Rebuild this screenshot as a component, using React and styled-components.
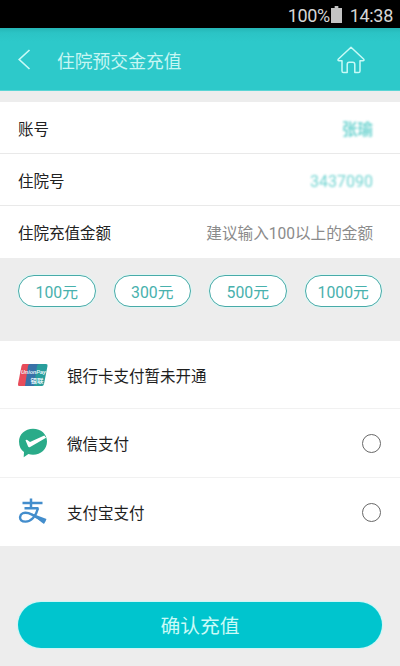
import React from 'react';
import styled, { createGlobalStyle } from 'styled-components';

const GlobalStyle = createGlobalStyle`
  * { box-sizing: border-box; }
  body {
    margin: 0;
    background: #ededed;
    font-family: Roboto, "Noto Sans CJK SC", sans-serif;
  }
  button { font-family: inherit; padding: 0; margin: 0; border: 0; background: none; }
`;

const Screen = styled.div`
  width: 400px;
  height: 666px;
  display: flex;
  flex-direction: column;
  background: #ededed;
  overflow: hidden;
`;

const StatusBar = styled.div`
  height: 28px;
  flex: none;
  background: #000;
  color: #d6d6d6;
  display: flex;
  justify-content: flex-end;
  align-items: center;
  padding: 3px 7px 0 0;
  font-size: 18px;
  line-height: 25px;
`;

const BatteryLevel = styled.span`
  letter-spacing: -0.4px;
`;

const BatteryIcon = styled.svg`
  width: 11px;
  height: 18px;
  margin: 0 8px 4px 1px;
`;

const Clock = styled.span`
  letter-spacing: -0.3px;
  white-space: nowrap;
`;

const Header = styled.header`
  height: 63px;
  flex: none;
  display: flex;
  align-items: center;
  padding: 1px 35px 0 18px;
  background: linear-gradient(#25b6b6 0, #2bc4c5 5px, #2dc9ca 14px);
  border-bottom: 1px solid #5bd5d5;
`;

const BackButton = styled.button`
  width: 39px;
  height: 24px;
  svg { display: block; }
`;

const Title = styled.h1`
  flex: 1;
  margin: 0;
  padding-top: 4px;
  font-size: 17.8px;
  line-height: 26px;
  font-weight: 400;
  color: #c6f6f3;
`;

const HomeButton = styled.button`
  width: 28px;
  height: 28px;
  svg { display: block; }
`;

const AccountPanel = styled.section`
  margin-top: 11px;
  flex: none;
  background: #fff;
`;

const Field = styled.div`
  height: 52px;
  display: flex;
  align-items: center;
  justify-content: space-between;
  padding: 5px 27px 0 18px;
  font-size: 15.5px;
  line-height: 24px;
  color: #222;
  border-bottom: 1px solid #e9e9e9;
  &:last-child { border-color: #fff; }
`;

const MaskedValue = styled.span`
  color: #43c6c2;
  font-size: ${(p) => p.$size}px;
  font-weight: ${(p) => p.$weight};
  opacity: 0.75;
  filter: blur(0.9px);
`;

const Hint = styled.span`
  color: #8b8b8b;
  font-size: 15.6px;
`;

const AmountBar = styled.section`
  height: 83px;
  flex: none;
  display: grid;
  grid-template-columns: repeat(4, 1fr);
  column-gap: 18px;
  padding: 17px 18px 0;
`;

const AmountChip = styled.button`
  height: 32px;
  border: 1px solid #48aaa8;
  border-radius: 16px;
  background: #fff;
  box-shadow: 0 0 1px 1px #dff5f3;
  color: #48b1ad;
  font-size: 15.8px;
  line-height: 30px;
  padding-top: 2px;
`;

const PaymentPanel = styled.section`
  flex: none;
  background: #fff;
`;

const PaymentRow = styled.div`
  height: ${(p) => p.$height}px;
  display: flex;
  align-items: center;
  padding: 0 19px 0 18px;
  border-bottom: 1px solid #f1f1f1;
  &:last-child { border-color: #fff; }
`;

const PaymentIcon = styled.div`
  width: 49px;
  svg { display: block; }
`;

const PaymentName = styled.span`
  flex: 1;
  padding-top: 4px;
  font-size: 15.5px;
  line-height: 24px;
  color: #1e1e1e;
`;

const Radio = styled.span`
  width: 19px;
  height: 19px;
  margin-top: 1px;
  border: 1px solid #686868;
  border-radius: 50%;
`;

const ConfirmButton = styled.button`
  height: 46px;
  flex: none;
  margin: 56px 18px 0;
  border-radius: 23px;
  background: #00c5ce;
  box-shadow: 0 0 1px 1px #c9f6f6;
  color: #cafaf7;
  font-size: 19.8px;
  line-height: 42px;
  padding-top: 4px;
`;

const UnionPayLogo = () => (
  <svg width="30" height="22" viewBox="0 0 30 22" overflow="visible">
    <path d="M5 0H14L9 22H1Q-.3 22 0 20L3.5 2Q4 0 5 0Z" fill="#e84c5a" />
    <path d="M12 0H22L18 22H7L10 2Q10.5 0 12 0Z" fill="#3872a8" />
    <path d="M21 0H28Q30 0 29.5 2L26 20Q25.5 22 24 22H16L19 2Q19.3 0 21 0Z" fill="#289e9c" />
    <text x="3" y="9.500" textLength="25" lengthAdjust="spacingAndGlyphs" fontSize="6.2" fontWeight="500" fontStyle="italic" fontFamily="Roboto, sans-serif" fill="#eef8fc">UnionPay</text>
    <text x="12.5" y="18.800" textLength="13" lengthAdjust="spacingAndGlyphs" fontSize="6" fontWeight="700" fontFamily="Noto Sans CJK SC, sans-serif" fill="#e3f4f8">银联</text>
  </svg>
);

const WeChatPayLogo = () => (
  <svg width="30" height="30" viewBox="0 0 30 30">
    <path d="M15 .8C7 .8 1 6.5 1 13.5c0 5 2 8.500 5 10.600L5.700 29.300l4.700-3.300c1.500.5 3 .7 4.600.7 8 0 14-5.700 14-13.200S23 .8 15 .8Z" fill="#2aab89" />
    <path d="M7.500 12.300q.8-.9 1.800-.2l2.700 2L26.300 7.500l1.800 2.300L11.700 19.200q-1 .5-1.600-.6Z" fill="#fff" />
  </svg>
);

const AlipayLogo = () => (
  <svg width="30" height="30" viewBox="0 0 30 30" fill="none" stroke="#438dcc">
    <path d="M13 1.500V11M4.500 6H24.500M6.500 11.200H20.500" strokeWidth="2.500" />
    <path d="M20 11.200C18 19.500 13 24.600 7.500 24.600C3.500 24.600 1.800 22.600 2.100 20C2.500 16.500 6 14.800 10.500 16.200C16 18.100 20 22 27.300 24.300" strokeWidth="2.400" />
    <path d="M14 16.600L28.500 22L26 27.100Q20.500 23.500 14 16.600Z" fill="#438dcc" stroke="none" />
  </svg>
);

const amounts = ['100元', '300元', '500元', '1000元'];

const payments = [
  { name: '银行卡支付暂未开通', Logo: UnionPayLogo, height: 68, selectable: false },
  { name: '微信支付', Logo: WeChatPayLogo, height: 69, selectable: true },
  { name: '支付宝支付', Logo: AlipayLogo, height: 68, selectable: true },
];

export default function App() {
  return (
    <Screen>
      <GlobalStyle />
      <StatusBar>
        <BatteryLevel>100%</BatteryLevel>
        <BatteryIcon viewBox="0 0 12 18" preserveAspectRatio="none">
          <path d="M4 1h4v2h4v15H0V3h4Z" fill="#c4c4c4" />
        </BatteryIcon>
        <Clock>14:38</Clock>
      </StatusBar>
      <Header>
        <BackButton aria-label="返回">
          <svg width="14" height="24" viewBox="0 0 14 24" fill="none">
            <path d="M11.500 2L1.200 11.500L11.500 21" stroke="#c8faf6" strokeWidth="1.700" />
          </svg>
        </BackButton>
        <Title>住院预交金充值</Title>
        <HomeButton aria-label="首页">
          <svg width="28" height="28" viewBox="0 0 28 28" fill="none">
            <path d="M14 1.200L1.200 13.200Q.6 14.800 2 14.800H5V25Q5 26.600 6.500 26.600H10.200V18.500Q10.200 16.300 12.200 16.300H15.800Q17.800 16.300 17.800 18.500V26.600H21.500Q23 26.600 23 25V14.800H26Q27.400 14.800 26.800 13.200Z" stroke="#c8faf6" strokeWidth="1.500" strokeLinejoin="round" />
          </svg>
        </HomeButton>
      </Header>
      <AccountPanel>
        <Field>
          <span>账号</span>
          <MaskedValue $size={15.5} $weight={700}>张瑜</MaskedValue>
        </Field>
        <Field>
          <span>住院号</span>
          <MaskedValue $size={16} $weight={400}>3437090</MaskedValue>
        </Field>
        <Field>
          <span>住院充值金额</span>
          <Hint>建议输入100以上的金额</Hint>
        </Field>
      </AccountPanel>
      <AmountBar>
        {amounts.map((amount) => <AmountChip key={amount}>{amount}</AmountChip>)}
      </AmountBar>
      <PaymentPanel>
        {payments.map(({ name, Logo, height, selectable }) => (
          <PaymentRow key={name} $height={height}>
            <PaymentIcon><Logo /></PaymentIcon>
            <PaymentName>{name}</PaymentName>
            {selectable && <Radio role="radio" aria-checked="false" aria-label={name} />}
          </PaymentRow>
        ))}
      </PaymentPanel>
      <ConfirmButton>确认充值</ConfirmButton>
    </Screen>
  );
}
